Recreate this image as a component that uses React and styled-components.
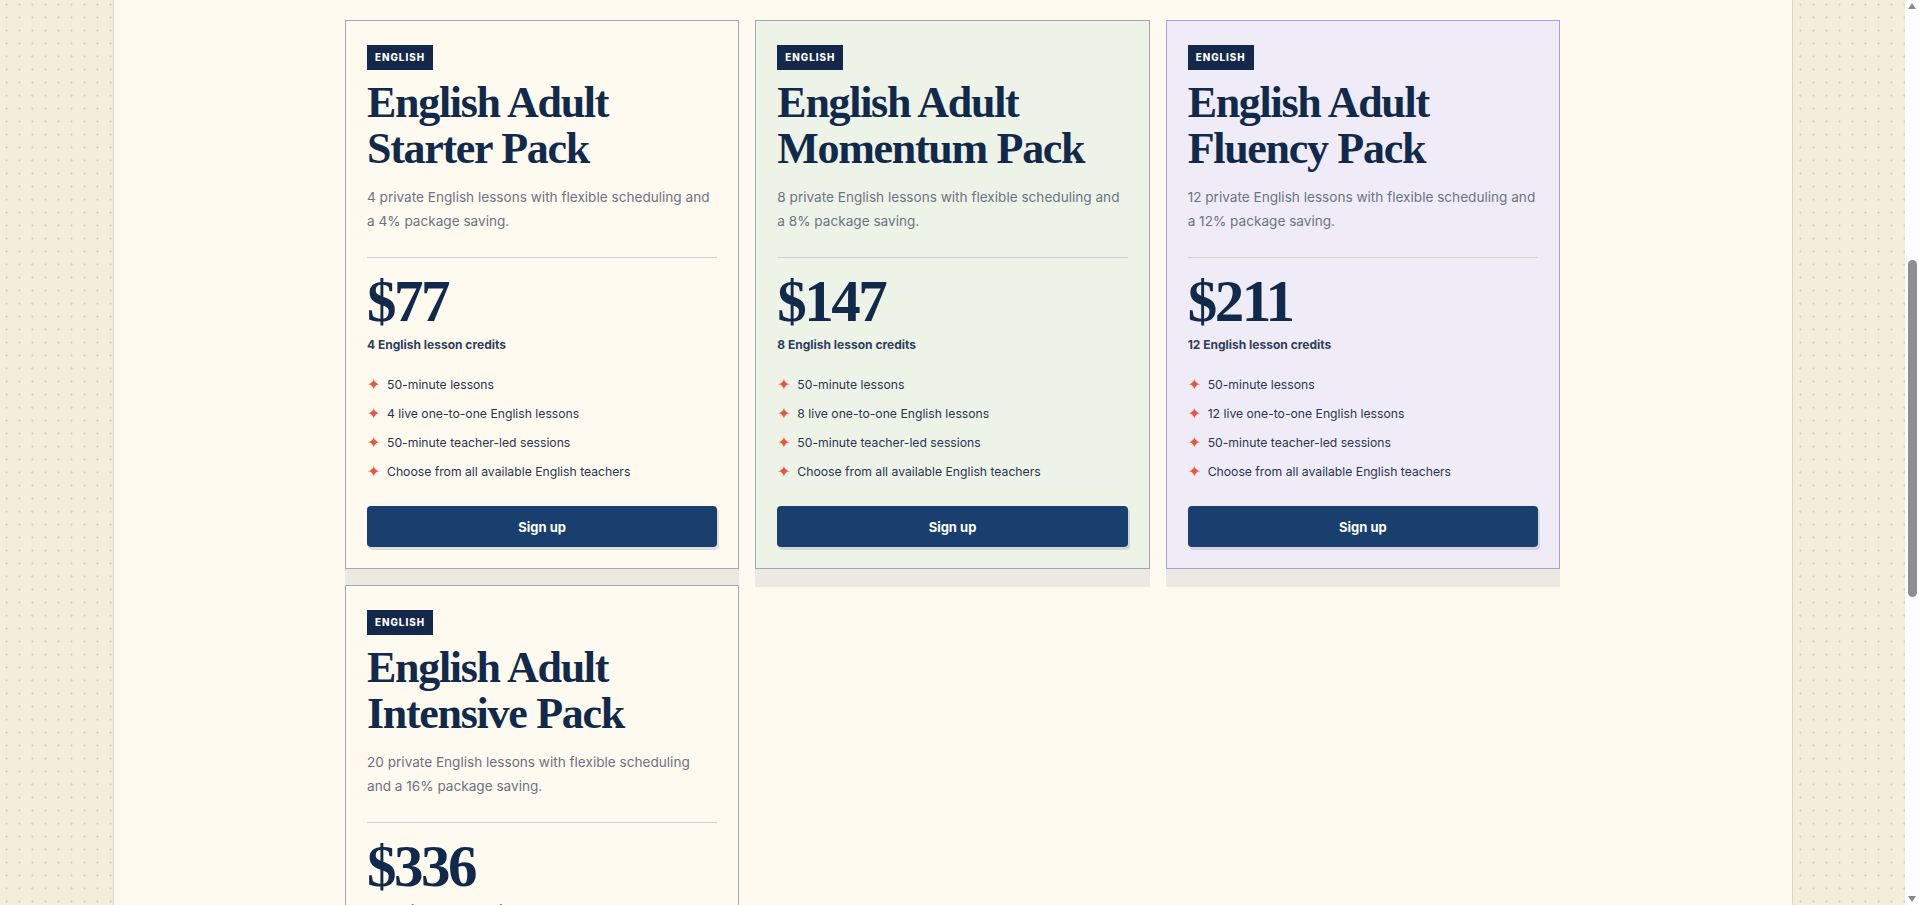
import React, { useLayoutEffect } from 'react';
import styled, { createGlobalStyle } from 'styled-components';

const GlobalStyle = createGlobalStyle`
    html {
        scroll-behavior: auto;
    }
    body {
        margin: 0;
        background-color: #f4eddc;
        background-image: radial-gradient(circle, #d8d2c4 0.9px, transparent 1.3px);
        background-size: 13px 13px;
        background-position: 0 2px;
        font-family: Inter, "Noto Sans", sans-serif;
        color: #13294b;
    }
`;

const packs = [
    {
        name: 'Starter',
        lessons: 4,
        price: 77,
        bg: '#fffaef',
        border: '#a3a8b1',
        description: '4 private English lessons with flexible scheduling and a 4% package saving.',
    },
    {
        name: 'Momentum',
        lessons: 8,
        price: 147,
        bg: '#eef3e8',
        border: '#9ea8b3',
        description: '8 private English lessons with flexible scheduling and a 8% package saving.',
    },
    {
        name: 'Fluency',
        lessons: 12,
        price: 211,
        bg: '#efecf7',
        border: '#a3a6cb',
        description: '12 private English lessons with flexible scheduling and a 12% package saving.',
    },
    {
        name: 'Intensive',
        lessons: 20,
        price: 336,
        bg: '#fffaef',
        border: '#a3a8b1',
        description: '20 private English lessons with flexible scheduling and a 16% package saving.',
    },
];

const Page = styled.div`
    margin-right: 14px;
`;

const Panel = styled.main`
    max-width: 1678px;
    margin: 0 auto;
    min-height: 100vh;
    background: #fffaf0;
    border-left: 1px solid #d9d4c9;
    border-right: 1px solid #d9d4c9;
    padding-bottom: 560px;
`;

const Intro = styled.section`
    height: 641px;
    display: flex;
    flex-direction: column;
    align-items: center;
    justify-content: flex-end;
    gap: 14px;
    box-sizing: border-box;
`;

const IntroTitle = styled.h1`
    margin: 0;
    font-family: "Liberation Serif", serif;
    font-size: 52px;
    letter-spacing: -1.5px;
    color: #13294b;
`;

const IntroText = styled.p`
    margin: 0 0 60px;
    font-size: 16px;
    color: #6b7384;
`;

const Grid = styled.div`
    max-width: 1215px;
    margin: 20px auto 0;
    display: grid;
    grid-template-columns: repeat(3, 1fr);
    gap: 16px;
    align-items: start;
`;

const Card = styled.article`
    display: flex;
    flex-direction: column;
    padding: 24px 21px 21px;
    background: ${props => props.$bg};
    border: 1px solid ${props => props.$border};
    box-shadow: 0 18px 0 #ece9e2;
`;

const Badge = styled.span`
    align-self: flex-start;
    display: inline-flex;
    align-items: center;
    height: 25px;
    padding: 0 8px;
    background: #13284a;
    color: #ffffff;
    font-size: 9.8px;
    font-weight: 800;
    letter-spacing: 1px;
`;

const Title = styled.h2`
    margin: 10px 0 0;
    font-family: "Liberation Serif", serif;
    font-size: 44px;
    line-height: 46px;
    font-weight: 700;
    letter-spacing: -1.3px;
    color: #112a4c;
`;

const Description = styled.p`
    margin: 13px 0 0;
    font-size: 13.6px;
    line-height: 24px;
    color: #6b7384;
`;

const Divider = styled.hr`
    margin: 24px 0 0;
    border: 0;
    border-top: 1px solid #cfd0cf;
`;

const Price = styled.div`
    margin-top: 14px;
    font-family: "Liberation Serif", serif;
    font-size: 59px;
    line-height: 58px;
    font-weight: 700;
    letter-spacing: -2.5px;
    color: #112a4c;
`;

const Credits = styled.div`
    margin-top: 7px;
    font-size: 12px;
    line-height: 16px;
    font-weight: 700;
    color: #2d3e5b;
`;

const Features = styled.ul`
    list-style: none;
    margin: 22px 0 0;
    padding: 0;
    display: flex;
    flex-direction: column;
    gap: 9px;
`;

const Feature = styled.li`
    display: flex;
    align-items: center;
    gap: 8px;
    font-size: 12.2px;
    line-height: 20px;
    color: #283551;
`;

const Star = styled.span`
    width: 12px;
    font-family: "DejaVu Sans", sans-serif;
    font-size: 16px;
    line-height: 1;
    color: #e8553b;
`;

const SignUp = styled.button`
    margin-top: 24px;
    height: 41px;
    border: 0;
    border-radius: 4px;
    background: #183f6e;
    box-shadow: 2px 3px 0 rgba(19, 41, 75, 0.13);
    color: #ffffff;
    font-family: Inter, "Noto Sans", sans-serif;
    font-size: 13px;
    font-weight: 700;
    cursor: pointer;
`;

// the window scrollbar, drawn over the right edge
const ScrollBar = styled.div`
    position: fixed;
    top: 0;
    right: 0;
    bottom: 0;
    width: 14px;
    background: #fdfdfd;
    display: flex;
    flex-direction: column;
    align-items: center;
`;

const Arrow = styled.span`
    margin-top: ${props => props.$down ? 'auto' : '3px'};
    margin-bottom: ${props => props.$down ? '3px' : '0'};
    width: 0;
    height: 0;
    border-left: 4.5px solid transparent;
    border-right: 4.5px solid transparent;
    border-bottom: ${props => props.$down ? '0' : '6px solid #8a8a8a'};
    border-top: ${props => props.$down ? '6px solid #8a8a8a' : '0'};
`;

const Thumb = styled.span`
    width: 9px;
    margin-left: 3px;
    margin-right: 2px;
    border-radius: 5px;
    background: #8f8f8f;
`;

function PackCard({ pack }) {
    const features = [
        '50-minute lessons',
        `${pack.lessons} live one-to-one English lessons`,
        '50-minute teacher-led sessions',
        'Choose from all available English teachers',
    ];
    return (
        <Card $bg={pack.bg} $border={pack.border}>
            <Badge>ENGLISH</Badge>
            <Title>English Adult<br/>{pack.name} Pack</Title>
            <Description>{pack.description}</Description>
            <Divider/>
            <Price>${pack.price}</Price>
            <Credits>{pack.lessons} English lesson credits</Credits>
            <Features>
                {features.map(item => (
                    <Feature key={item}>
                        <Star>✦</Star>
                        {item}
                    </Feature>
                ))}
            </Features>
            <SignUp>Sign up</SignUp>
        </Card>
    );
}

export default function App() {
    useLayoutEffect(() => {
        window.scrollTo(0, 641);
    }, []);

    return (
        <>
            <GlobalStyle/>
            <Page>
                <Panel>
                    <Intro>
                        <IntroTitle>English lesson packs</IntroTitle>
                        <IntroText>Save on private lessons when you book a package.</IntroText>
                    </Intro>
                    <Grid>
                        {packs.map(pack => <PackCard key={pack.name} pack={pack}/>)}
                    </Grid>
                </Panel>
            </Page>
            <ScrollBar>
                <Arrow/>
                <Thumb style={{ marginTop: 251, height: 337 }}/>
                <Arrow $down/>
            </ScrollBar>
        </>
    );
}
